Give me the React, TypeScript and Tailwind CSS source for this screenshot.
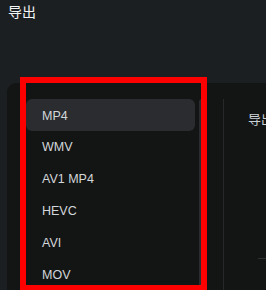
import React from 'react';

const FORMATS = ['MP4', 'WMV', 'AV1 MP4', 'HEVC', 'AVI', 'MOV'];

export default function App() {
    const selected = 'MP4';

    return (
        <div
            className="relative w-[266px] h-[290px] overflow-hidden bg-[#1c1f22]"
            style={{ fontFamily: '"Liberation Sans", "Noto Sans CJK SC", sans-serif' }}
        >
            <div className="h-[83px] pl-[8px] pt-[3px] text-[14px] leading-[18px] text-[#f2f4f6]">导出</div>

            <div className="ml-[7px] h-[207px] rounded-tl-[9px] bg-[#131414] flex">
                {/* format list */}
                <div className="w-[188px] shrink-0 pl-[19px] pt-[16px] flex flex-col">
                    {FORMATS.map((f) => (
                        <div
                            key={f}
                            className={`h-8 pl-4 pt-[2px] flex items-center rounded-[6px] text-[12.5px] text-[#d3d7db] ${
                                f === selected ? 'bg-[#2a2c2f]' : ''
                            }`}
                        >
                            {f}
                        </div>
                    ))}
                </div>

                {/* scrollbar */}
                <div className="shrink-0 ml-[4px] mt-[16px] w-[6px] rounded-t-[3px] bg-[#2a2c2f]" />

                {/* divider */}
                <div className="shrink-0 ml-[18px] mt-[16px] w-px bg-[#26282a]" />

                {/* settings */}
                <div className="w-[200px] shrink-0 pl-[24px] pt-[29px] flex flex-col">
                    <div className="text-[13px] leading-[16px] whitespace-nowrap text-[#c9d0d6]">导出设置</div>
                    <div className="mt-[130px] ml-[10px] h-px bg-[#2e3033]" />
                </div>
            </div>

            {/* annotation box */}
            <div className="absolute left-[20px] top-[77px] w-[187px] h-[214px] border-[6px] border-[#ff0000]" />
        </div>
    );
}
